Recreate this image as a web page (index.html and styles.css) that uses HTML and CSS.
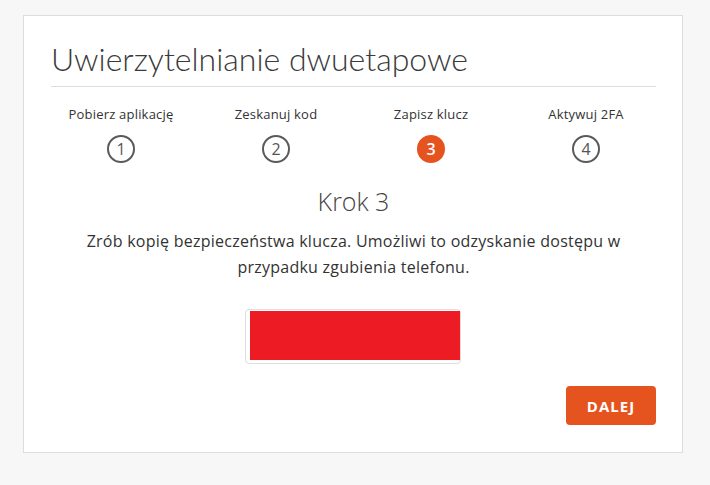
FILE: index.html
```html
<!DOCTYPE html>
<html lang="pl">
<head>
    <meta charset="UTF-8">
    <meta name="viewport" content="width=device-width, initial-scale=1.0">
    <title>Uwierzytelnianie dwuetapowe</title>
    <link rel="stylesheet" href="styles.css">
</head>
<body>
    <div class="card">
        <h1 class="title">Uwierzytelnianie dwuetapowe</h1>
        <div class="steps">
            <div class="step">
                <span class="step-label">Pobierz aplikację</span>
                <span class="step-num">1</span>
            </div>
            <div class="step">
                <span class="step-label">Zeskanuj kod</span>
                <span class="step-num">2</span>
            </div>
            <div class="step active">
                <span class="step-label">Zapisz klucz</span>
                <span class="step-num">3</span>
            </div>
            <div class="step">
                <span class="step-label">Aktywuj 2FA</span>
                <span class="step-num">4</span>
            </div>
        </div>
        <h2 class="step-title">Krok 3</h2>
        <p class="step-text">Zrób kopię bezpieczeństwa klucza. Umożliwi to odzyskanie dostępu w przypadku zgubienia telefonu.</p>
        <div class="key-box">
            <div class="key-value"></div>
        </div>
        <div class="actions">
            <button class="btn-next">DALEJ</button>
        </div>
    </div>
</body>
</html>
```

FILE: styles.css
```css
body {
    margin: 0;
    padding: 15px 27px 30px 23px;
    background-color: #f7f7f7;
    font-family: "Open Sans", Arial, sans-serif;
    color: #333;
}
.card {
    background-color: white;
    border: 1px solid #dddddd;
    height: 436px;
    padding: 0 26px 0 27px;
    box-sizing: content-box;
    width: 605px;
}
.title {
    font-family: Lato, sans-serif;
    font-weight: 300;
    font-size: 32px;
    color: #3a3a3a;
    margin: 0;
    padding: 23px 0 8px 0;
    border-bottom: 1px solid #dddddd;
}
.steps {
    display: grid;
    grid-template-columns: repeat(4, 155px);
    justify-content: center;
    margin-top: 18px;
}
.step {
    display: flex;
    flex-direction: column;
    align-items: center;
}
.step-label {
    font-size: 13px;
    color: #333;
    height: 18px;
    line-height: 18px;
    letter-spacing: 0.2px;
}
.step-num {
    margin-top: 12px;
    width: 24px;
    height: 24px;
    border: 2px solid #5a5a5a;
    border-radius: 50%;
    display: flex;
    align-items: center;
    justify-content: center;
    font-size: 16px;
    color: #555;
}
.step.active .step-num {
    background-color: #e5531f;
    border-color: #e5531f;
    color: white;
    font-weight: 600;
}
.step-title {
    text-align: center;
    font-weight: 300;
    font-size: 25px;
    color: #444;
    margin: 22px 0 0 0;
    line-height: 32px;
}
.step-text {
    text-align: center;
    font-size: 16px;
    line-height: 26px;
    letter-spacing: 0.25px;
    margin: 11px auto 0;
    width: 580px;
}
.key-box {
    width: 210px;
    height: 49px;
    margin: 29px auto 0;
    border: 1px solid #dddddd;
    border-radius: 4px;
    padding: 1px 0 3px 4px;
    position: relative;
    left: -1px;
}
.key-value {
    height: 100%;
    background-color: #ed1c24;
}
.actions {
    display: flex;
    justify-content: flex-end;
    margin-top: 22px;
}
.btn-next {
    background-color: #e5531f;
    color: white;
    border: none;
    border-radius: 4px;
    width: 90px;
    height: 39px;
    font-family: "Open Sans", Arial, sans-serif;
    font-weight: 700;
    font-size: 15px;
    letter-spacing: 1px;
}
```
